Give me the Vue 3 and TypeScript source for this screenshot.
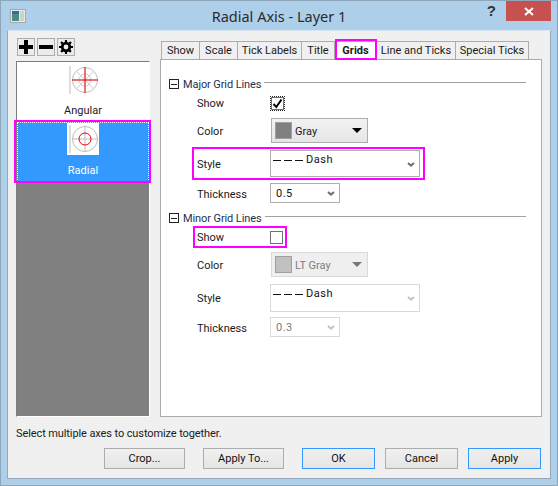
<script setup lang="ts">
// Origin "Radial Axis - Layer 1" dialog, Grids tab
const tabs = [
  { label: "Show", width: 39 },
  { label: "Scale", width: 38 },
  { label: "Tick Labels", width: 64 },
  { label: "Title", width: 33 },
  { label: "Grids", width: 42, active: true },
  { label: "Line and Ticks", width: 79 },
  { label: "Special Ticks", width: 73 },
];
const spokes = [0, 45, 90, 135];
</script>

<template>
  <div class="window">
    <header class="titlebar">
      <svg class="app-icon" width="16" height="14" viewBox="0 0 16 14">
        <rect x="0.5" y="0.5" width="15" height="13" fill="#e8e8e8" stroke="#a8a8a8" />
        <rect x="2" y="2" width="7" height="10" fill="#4d8a8a" />
        <rect x="2" y="2" width="7" height="3" fill="#2f6f9f" />
        <rect x="10" y="2" width="4" height="10" fill="#c8d8c0" />
      </svg>
      <span class="title">Radial Axis - Layer 1</span>
      <span class="help">?</span>
      <span class="close">
        <svg width="10" height="9" viewBox="0 0 10 9">
          <path d="M1 1l8 7M9 1L1 8" stroke="#fff" stroke-width="2" fill="none" />
        </svg>
      </span>
    </header>

    <div class="client">
      <div class="main">
        <aside class="side">
          <div class="tools">
            <button class="tool">
              <svg width="14" height="14" viewBox="0 0 14 14"><path d="M7 0v14M0 7h14" stroke="#000" stroke-width="4" /></svg>
            </button>
            <button class="tool">
              <svg width="14" height="14" viewBox="0 0 14 14"><path d="M0 7h14" stroke="#000" stroke-width="4" /></svg>
            </button>
            <button class="tool">
              <svg width="14" height="14" viewBox="0 0 14 14">
                <circle cx="7" cy="7" r="3.8" fill="none" stroke="#000" stroke-width="2.8" />
                <path d="M7 0v14M0 7h14M2 2l10 10M12 2L2 12" stroke="#000" stroke-width="2.2" stroke-dasharray="3 8 3" />
              </svg>
            </button>
          </div>
          <div class="axis-list">
            <div class="axis">
              <svg class="axis-icon" width="32" height="32" viewBox="0 0 32 32">
                <path d="M3 2v28" stroke="#bdbdbd" />
                <circle cx="18" cy="16" r="12.5" fill="none" stroke="#bdbdbd" />
                <circle cx="18" cy="16" r="6" fill="none" stroke="#cfcfcf" />
                <path v-for="a in spokes" :key="a" d="M18 4v24" stroke="#cfcfcf" :transform="`rotate(${a} 18 16)`" />
                <path d="M18 3v26M5 16h26" stroke="#f00000" />
              </svg>
              <span>Angular</span>
            </div>
            <div class="axis selected">
              <svg class="axis-icon" width="32" height="32" viewBox="0 0 32 32">
                <path d="M3 2v28" stroke="#bdbdbd" />
                <circle cx="18" cy="16" r="12.5" fill="none" stroke="#bdbdbd" />
                <path d="M18 3v26M5 16h26" stroke="#bdbdbd" />
                <circle cx="18" cy="16" r="6" fill="none" stroke="#f00000" />
              </svg>
              <span>Radial</span>
            </div>
            <div class="axis-rest"></div>
          </div>
        </aside>

        <section class="tabbed">
          <nav class="tabs">
            <span
              v-for="t in tabs"
              :key="t.label"
              class="tab"
              :class="{ active: t.active }"
              :style="{ width: t.width + 'px' }"
            >{{ t.label }}</span>
          </nav>
          <div class="pane">
            <div class="group-head">
              <span class="collapse"></span>
              <span class="group-title">Major Grid Lines</span>
              <span class="group-line"></span>
            </div>
            <div class="row r-show">
              <label>Show</label>
              <span class="check focus">
                <svg width="11" height="11" viewBox="0 0 11 11"><path d="M1.5 6l2.8 3L9.5 1.5" fill="none" stroke="#000" stroke-width="2" /></svg>
              </span>
            </div>
            <div class="row r-color nudge">
              <label>Color</label>
              <div class="swatch-drop">
                <span class="swatch gray"></span>
                <span class="drop-text">Gray</span>
                <span class="caret"></span>
              </div>
            </div>
            <div class="row r-style mark nudge">
              <label>Style</label>
              <div class="combo wide">
                <span class="dash"></span>
                <span class="combo-text">Dash</span>
                <svg class="chev" width="8" height="5" viewBox="0 0 8 5"><path d="M1 1l3 2.6L7 1" fill="none" stroke="#6f6f6f" stroke-width="2" /></svg>
              </div>
            </div>
            <div class="row r-thick nudge">
              <label>Thickness</label>
              <div class="combo narrow">
                <span class="combo-text num">0.5</span>
                <svg class="chev" width="8" height="5" viewBox="0 0 8 5"><path d="M1 1l3 2.6L7 1" fill="none" stroke="#6f6f6f" stroke-width="2" /></svg>
              </div>
            </div>

            <div class="group-head minor">
              <span class="collapse"></span>
              <span class="group-title">Minor Grid Lines</span>
              <span class="group-line"></span>
            </div>
            <div class="row r-show2 mark-small">
              <label>Show</label>
              <span class="check"></span>
            </div>
            <div class="row r-color2 nudge">
              <label>Color</label>
              <div class="swatch-drop disabled">
                <span class="swatch ltgray"></span>
                <span class="drop-text">LT Gray</span>
                <span class="caret"></span>
              </div>
            </div>
            <div class="row r-style2">
              <label>Style</label>
              <div class="combo wide disabled">
                <span class="dash"></span>
                <span class="combo-text">Dash</span>
                <svg class="chev" width="8" height="5" viewBox="0 0 8 5"><path d="M1 1l3 2.6L7 1" fill="none" stroke="#c4c4c4" stroke-width="2" /></svg>
              </div>
            </div>
            <div class="row r-thick2 nudge">
              <label>Thickness</label>
              <div class="combo narrow disabled">
                <span class="combo-text num">0.3</span>
                <svg class="chev" width="8" height="5" viewBox="0 0 8 5"><path d="M1 1l3 2.6L7 1" fill="none" stroke="#c4c4c4" stroke-width="2" /></svg>
              </div>
            </div>
          </div>
        </section>
      </div>

      <p class="hint">Select multiple axes to customize together.</p>

      <footer class="actions">
        <button class="btn crop">Crop...</button>
        <button class="btn apply-to">Apply To...</button>
        <button class="btn small blue ok">OK</button>
        <button class="btn small">Cancel</button>
        <button class="btn small blue">Apply</button>
      </footer>
    </div>
  </div>
</template>

<style scoped>
.window {
  width: 558px;
  height: 486px;
  box-sizing: border-box;
  display: flex;
  flex-direction: column;
  background: #aecfe9;
  border: 1px solid #8ea6ba;
  font-family: Roboto, sans-serif;
  font-size: 11px;
  color: #1a1a1a;
}
.titlebar {
  height: 29px;
  flex: none;
  display: flex;
  align-items: flex-start;
  position: relative;
}
.app-icon {
  margin: 8px 0 0 9px;
}
.title {
  position: absolute;
  left: 0;
  right: 0;
  top: 5px;
  text-align: center;
  font-family: "Noto Sans", sans-serif;
  font-size: 14.5px;
  color: #2b2b2b;
}
.help {
  margin: 1px 10px 0 auto;
  font-size: 15px;
  font-weight: 700;
  color: #333;
  font-family: "Liberation Sans", sans-serif;
}
.close {
  width: 45px;
  height: 20px;
  margin-right: 6px;
  background: #c75050;
  display: flex;
  align-items: center;
  justify-content: center;
}
.client {
  flex: 1;
  margin: 0 6px 6px;
  background: #f0f0f0;
  border: 1px solid #93a9bb;
  border-top-color: #d9e7f2;
  display: flex;
  flex-direction: column;
  min-height: 0;
  padding: 7px 8px 0 8px;
}
.main {
  display: flex;
  height: 379px;
}
.side {
  width: 134px;
  flex: none;
  display: flex;
  flex-direction: column;
}
.tools {
  display: flex;
  gap: 2px;
  padding-left: 1px;
  height: 23px;
  flex: none;
}
.tool {
  width: 18px;
  height: 18px;
  padding: 0;
  background: #ececec;
  border: 1px solid #adadad;
  display: flex;
  align-items: center;
  justify-content: center;
}
.axis-list {
  flex: 1;
  display: flex;
  flex-direction: column;
  background: #fff;
  border: 1px solid #fff;
  border-top: 1px solid #7d7d7d;
  border-left: 1px solid #7d7d7d;
  position: relative;
}
.axis {
  height: 61px;
  flex: none;
  display: flex;
  flex-direction: column;
  align-items: center;
  position: relative;
  box-sizing: border-box;
  padding-top: 2px;
}
.axis-icon {
  background: #fff;
  margin-bottom: 7px;
}
.axis span {
  line-height: 16px;
}
.selected {
  background: #3399ff;
  color: #fff;
  height: 60px;
  margin-top: -1px;
  padding-top: 1px;
  outline: 1px dotted #fff;
  outline-offset: -1px;
}
.selected .axis-icon {
  margin-bottom: 8px;
}
.selected::after {
  content: "";
  position: absolute;
  inset: -2px -2px -1px -3px;
  border: 2px solid #ff00ff;
}
.axis-rest {
  flex: 1;
  background: #808080;
}
.tabbed {
  margin-left: 10px;
  width: 382px;
  flex: none;
  display: flex;
  flex-direction: column;
  padding-top: 3px;
}
.tabs {
  display: flex;
  height: 18px;
  flex: none;
  padding-left: 1px;
  position: relative;
  z-index: 1;
}
.tab {
  box-sizing: border-box;
  border: 1px solid #acacac;
  border-left-width: 0;
  border-bottom: 0;
  background: #f0f0f0;
  text-align: center;
  line-height: 17px;
  white-space: nowrap;
}
.tab:first-child {
  border-left-width: 1px;
}
.tab.active {
  font-weight: 700;
  background: #fff;
  position: relative;
}
.tab.active::after {
  content: "";
  position: absolute;
  inset: -3px -1px -1px 0;
  border: 2px solid #ff00ff;
}
.pane {
  flex: 1;
  background: #fff;
  border: 1px solid #acacac;
  padding: 16px 15px 0 8px;
  display: flex;
  flex-direction: column;
}
.group-head {
  display: flex;
  align-items: center;
  height: 16px;
  flex: none;
}
.collapse {
  border: 1px solid #222;
  box-sizing: border-box;
  width: 10px;
  height: 10px;
  margin-right: 4px;
  background: linear-gradient(#222, #222) center / 6px 1px no-repeat;
}
.group-title {
  color: #1f2f4f;
  margin-right: 3px;
  letter-spacing: -0.1px;
}
.group-line {
  flex: 1;
  height: 1px;
  background: #a0a0a0;
  margin-top: -4px;
}
.row {
  display: flex;
  align-items: center;
  margin-left: 28px;
  flex: none;
  position: relative;
}
.row label {
  width: 73px;
  flex: none;
}
.nudge label {
  padding-top: 2px;
}
.r-show {
  height: 16px;
  margin-top: 3px;
}
.r-color {
  height: 25px;
  margin-top: 7px;
}
.r-color2 {
  height: 25px;
  margin-top: 4px;
}
.r-style {
  height: 27px;
  margin-top: 7px;
}
.r-thick {
  height: 20px;
  margin-top: 6px;
}
.minor {
  margin-top: 7px;
}
.r-show2 {
  height: 22px;
  margin-top: 0;
}
.r-style2 {
  height: 28px;
  margin-top: 7px;
}
.r-thick2 {
  height: 20px;
  margin-top: 5px;
}
.mark::after {
  content: "";
  position: absolute;
  inset: -3px 5px -3px -5px;
  width: 233px;
  box-sizing: border-box;
  border: 2px solid #ff00ff;
}
.mark-small::after {
  content: "";
  position: absolute;
  left: -4px;
  top: 0;
  width: 94px;
  height: 22px;
  box-sizing: border-box;
  border: 2px solid #ff00ff;
}
.check {
  width: 13px;
  height: 13px;
  box-sizing: border-box;
  border: 1px solid #707070;
  background: #fff;
  display: flex;
  align-items: center;
  justify-content: center;
}
.check.focus {
  margin-left: 1px;
  outline: 1px dotted #222;
  outline-offset: 0;
}
.swatch-drop {
  width: 97px;
  height: 25px;
  margin-left: 1px;
  box-sizing: border-box;
  border: 1px solid #adadad;
  background: linear-gradient(#f2f2f2, #e5e5e5);
  display: flex;
  align-items: center;
  padding: 0 5px 0 3px;
}
.swatch {
  width: 17px;
  height: 17px;
  box-sizing: border-box;
  border: 1px solid #a0a0a0;
  margin-right: 3px;
}
.gray {
  background: #808080;
}
.ltgray {
  background: #c0c0c0;
}
.drop-text {
  flex: 1;
  padding-top: 2px;
}
.caret {
  width: 0;
  height: 0;
  border-left: 5px solid transparent;
  border-right: 5px solid transparent;
  border-top: 5px solid #000;
}
.swatch-drop.disabled {
  background: #efefef;
  border-color: #d9d9d9;
  color: #7d7d7d;
}
.swatch-drop.disabled .caret {
  border-top-color: #777;
}
.combo {
  height: 100%;
  box-sizing: border-box;
  border: 1px solid #adadad;
  background: #fff;
  display: flex;
  align-items: center;
  position: relative;
}
.wide {
  width: 150px;
  align-items: flex-start;
  padding: 2px 0 0 2px;
}
.narrow {
  width: 70px;
  padding-left: 5px;
}
.combo.disabled {
  border-color: #d9d9d9;
}
.combo.disabled .num {
  color: #7d7d7d;
}
.dash {
  width: 30px;
  height: 1px;
  margin: 7px 3px 0 0;
  background: repeating-linear-gradient(90deg, #111 0 8px, transparent 8px 11px);
}
.combo-text {
  letter-spacing: 0.5px;
  color: #111;
}
.chev {
  position: absolute;
  right: 4px;
  top: 50%;
  margin-top: -2px;
}
.hint {
  margin: 9px 0 0;
  line-height: 16px;
  height: 16px;
  letter-spacing: -0.1px;
}
.actions {
  display: flex;
  margin-top: 6px;
  padding-left: 88px;
  gap: 10px;
}
.btn {
  font: inherit;
  color: #111;
  height: 21px;
  padding: 0;
  box-sizing: border-box;
  border: 1px solid #adadad;
  background: linear-gradient(#f0f0f0, #e5e5e5);
}
.crop,
.apply-to {
  width: 81px;
}
.apply-to {
  margin-left: 8px;
}
.small {
  width: 73px;
}
.ok {
  margin-left: 8px;
}
.blue {
  border-color: #3399ff;
}
</style>

<style>
html,
body {
  margin: 0;
  background: #aecfe9;
}
</style>
